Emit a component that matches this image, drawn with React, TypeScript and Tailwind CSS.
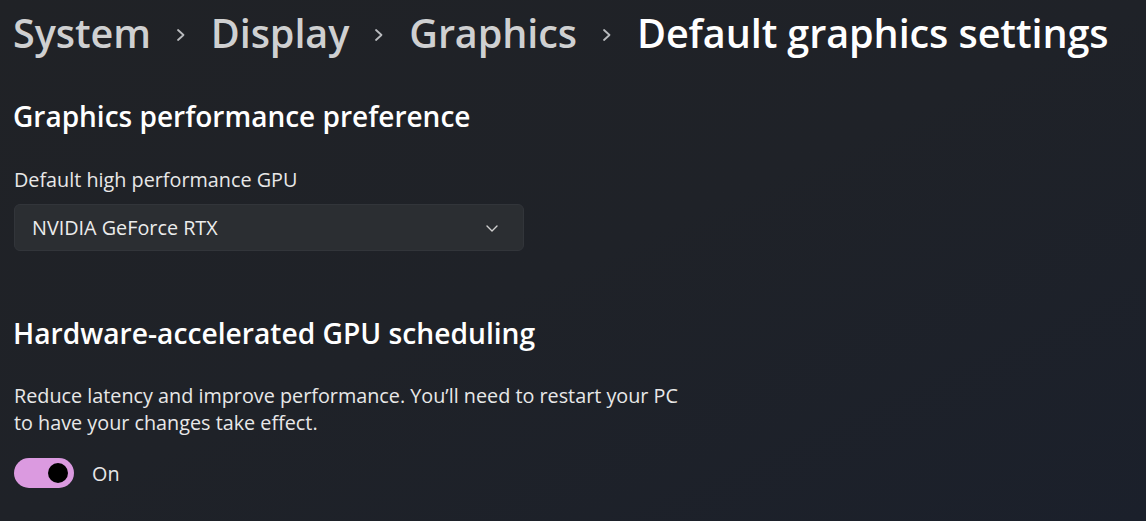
import React from 'react';

const crumbs = ['System', 'Display', 'Graphics'];

const Chevron: React.FC = () => (
  <svg width="12" height="18" viewBox="0 0 12 18" className="shrink-0 mx-[24px] mt-[2px]">
    <path d="M3 4 L8.5 9 L3 14" fill="none" stroke="#b9bbbe" strokeWidth="1.8" strokeLinecap="round" strokeLinejoin="round" />
  </svg>
);

const App: React.FC = () => {
  return (
    <div className="w-[1146px] h-[521px] overflow-hidden bg-gradient-to-br from-[#202226] via-[#1f2228] to-[#1b202b] text-white font-['Segoe_UI','Open_Sans',sans-serif]">
      <div className="flex flex-col pl-[13px]">
        {/* breadcrumb */}
        <div className="flex items-center h-[66px] pt-[1px] text-[39.6px] font-semibold tracking-[-0.1px] whitespace-nowrap">
          {crumbs.map((c) => (
            <React.Fragment key={c}>
              <span className="text-[#cfd0d1]">{c}</span>
              <Chevron />
            </React.Fragment>
          ))}
          <span className="text-white">Default graphics settings</span>
        </div>

        {/* graphics preference */}
        <h2 className="mt-[32px] text-[28px] leading-[36px] font-semibold text-white">Graphics performance preference</h2>
        <div className="mt-[33px] text-[19.8px] leading-[26px] text-[#e8e8e8] pl-[1px]">Default high performance GPU</div>
        <button className="mt-[11px] w-[510px] h-[47px] ml-[1px] flex items-center justify-between pl-[17px] pr-[24px] rounded-[6px] bg-[#2b2e32] border border-[#32353a] text-[19.8px] text-[#ececec]">
          <span>NVIDIA GeForce RTX</span>
          <svg width="14" height="10" viewBox="0 0 14 10">
            <path d="M2 3 L7 8 L12 3" fill="none" stroke="#d0d0d0" strokeWidth="1.4" strokeLinecap="round" strokeLinejoin="round" />
          </svg>
        </button>

        {/* gpu scheduling */}
        <h2 className="mt-[64px] text-[28.2px] leading-[36px] font-semibold text-white">Hardware-accelerated GPU scheduling</h2>
        <p className="mt-[31px] w-[672px] pl-[1px] text-[19.8px] leading-[27px] text-[#e8e8e8]">
          Reduce latency and improve performance. You’ll need to restart your PC to have your changes take effect.
        </p>
        <div className="mt-[21px] ml-[1px] flex items-center gap-[18px]">
          <div className="w-[60px] h-[30px] rounded-full bg-[#db9ae0] flex items-center justify-end pr-[6px]">
            <div className="w-[20px] h-[20px] rounded-full bg-black" />
          </div>
          <span className="text-[19.8px] text-[#e8e8e8] pt-[2px]">On</span>
        </div>
      </div>
    </div>
  );
};

export default App;
